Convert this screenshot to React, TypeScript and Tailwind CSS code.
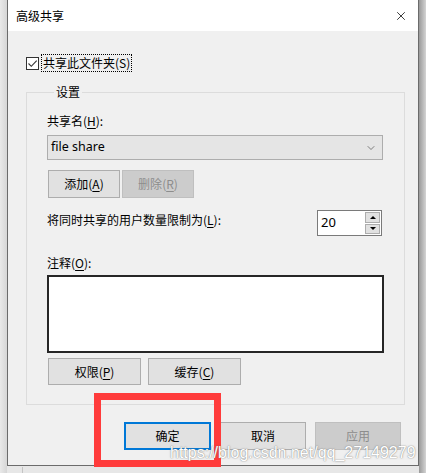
import { X, ChevronDown } from "lucide-react"

const cjk = { fontFamily: '"Noto Sans CJK SC", "Noto Sans", sans-serif' }

function Btn({ label, k, rest, disabled, w, primary }: { label: string; k: string; rest?: string; disabled?: boolean; w: string; primary?: boolean }) {
  return (
    <div
      className={`${w} flex items-center justify-center text-[12px] leading-none ${
        disabled
          ? "border border-[#bfbfbf] bg-[#cccccc] text-[#8d8d8d]"
          : primary
            ? "border-2 border-[#0078d7] bg-[#e1e1e1] text-black"
            : "border border-[#adadad] bg-[#e1e1e1] text-black"
      }`}
    >
      {label}
      {k && (
        <>
          (<span className="underline underline-offset-2">{k}</span>){rest}
        </>
      )}
    </div>
  )
}

export default function App() {
  return (
    <div className="relative flex h-[473px] w-[426px] overflow-hidden bg-[#e7e7e7]" style={cjk}>
      {/* left shadow */}
      <div className="h-full w-[7px] bg-gradient-to-r from-[#e9e9e9] to-[#d6d6d6]" />

      {/* dialog */}
      <div className="flex h-[466px] w-[412px] flex-col border-x border-b border-[#6b6b6b] bg-[#f0f0f0]">
        <div className="flex h-[31px] items-center justify-between bg-white pl-2 pr-[10px]">
          <span className="text-[12px] text-black">高级共享</span>
          <X size={14} strokeWidth={1.3} className="text-black" />
        </div>

        {/* share checkbox */}
        <div className="ml-[18px] mt-[23px] flex h-[18px] items-center">
          <div className="flex h-[13px] w-[13px] items-center justify-center border border-[#333] bg-white">
            <svg width="11" height="11" viewBox="0 0 11 11">
              <path d="M1.5 5.5 L4.3 8.3 L9.7 2.6" fill="none" stroke="#333" strokeWidth="1.1" />
            </svg>
          </div>
          <div className="ml-[2px] flex h-[18px] items-center border border-dotted border-black px-[1px] text-[12px] leading-none text-black">
            共享此文件夹(<span>S</span>)
          </div>
        </div>

        {/* settings group */}
        <fieldset className="ml-[18px] mr-[17px] mt-[12px] border border-[#dcdcdc] px-[20px] pb-[19px]">
          <legend className="ml-[7px] px-[2px] text-[12px] leading-[16px] text-black">设置</legend>

          <div className="mt-[13px] h-[16px] text-[12px] leading-[16px] text-black">
            共享名(<span className="underline underline-offset-2">H</span>):
          </div>
          <div className="mt-[6px] flex h-[25px] w-[336px] items-center justify-between border border-[#adadad] bg-[#e5e5e5] pl-[3px] pr-[5px]">
            <span className="text-[12.5px] text-black" style={{ fontFamily: '"Noto Sans", sans-serif' }}>
              file share
            </span>
            <ChevronDown size={12} strokeWidth={1.3} className="text-[#444]" />
          </div>

          <div className="mt-[10px] flex gap-[2px] pl-[1px]">
            <Btn label="添加" k="A" w="h-[28px] w-[72px]" />
            <Btn label="删除" k="R" w="h-[28px] w-[72px]" disabled />
          </div>

          <div className="mt-[12px] flex items-start justify-between pr-[2px]">
            <div className="mt-[2px] text-[12px] leading-[16px] text-black">
              将同时共享的用户数量限制为(<span className="underline underline-offset-2">L</span>):
            </div>
            <div className="flex h-[26px] w-[65px] border border-[#7a7a7a] bg-white">
              <div className="flex flex-1 items-center pl-[3px] text-[13px] text-black" style={{ fontFamily: '"Noto Sans", sans-serif' }}>
                20
              </div>
              <div className="flex w-[17px] flex-col gap-[1px] p-[1px]">
                <div className="flex flex-1 items-center justify-center border border-[#adadad] bg-[#e1e1e1]">
                  <div className="h-0 w-0 border-x-[3px] border-b-[3px] border-x-transparent border-b-black" />
                </div>
                <div className="flex flex-1 items-center justify-center border border-[#adadad] bg-[#e1e1e1]">
                  <div className="h-0 w-0 border-x-[3px] border-t-[3px] border-x-transparent border-t-black" />
                </div>
              </div>
            </div>
          </div>

          <div className="mt-[19px] h-[16px] text-[12px] leading-[16px] text-black">
            注释(<span className="underline underline-offset-2">O</span>):
          </div>
          <div className="mt-[4px] h-[78px] w-[337px] border-2 border-[#262626] bg-white" />

          <div className="mt-[5px] flex gap-[7px] pl-[1px]">
            <Btn label="权限" k="P" w="h-[27px] w-[93px]" />
            <Btn label="缓存" k="C" w="h-[27px] w-[93px]" />
          </div>
        </fieldset>

        <div className="mr-[17px] mt-[17px] flex justify-end gap-[9px]">
          <Btn label="确定" k="" w="h-[28px] w-[87px]" primary />
          <Btn label="取消" k="" w="h-[28px] w-[86px]" />
          <Btn label="应用" k="" w="h-[28px] w-[86px]" disabled />
        </div>
      </div>

      {/* right shadow */}
      <div className="h-full flex-1 bg-gradient-to-r from-[#9a9a9a] to-[#d4d4d4]" />

      {/* window behind, below */}
      <div className="absolute left-[22px] top-[467px] h-[6px] w-px bg-[#c4c4c4]" />

      {/* red highlight */}
      <div className="absolute left-[94px] top-[393px] h-[74px] w-[127px] border-[7px] border-[#ff3b3b]" />

      {/* watermark */}
      <div
        className="absolute left-[170px] top-[444px] text-[16px] leading-[18px] text-white"
        style={{
          fontFamily: '"Liberation Sans", Arial, sans-serif',
          textShadow: "0 0 1px rgba(110,110,110,0.9), 0 0 2px rgba(140,140,140,0.6)",
        }}
      >
        https://blog.csdn.net/qq_27149279
      </div>
    </div>
  )
}
